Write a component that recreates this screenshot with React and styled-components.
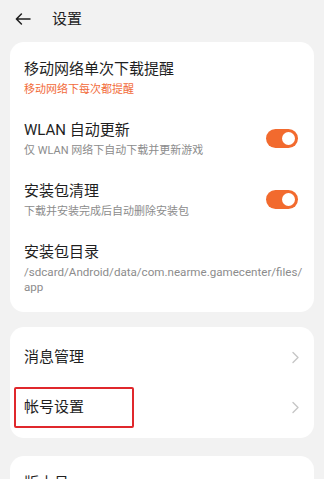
import React from 'react';
import styled, { createGlobalStyle } from 'styled-components';

const GlobalStyle = createGlobalStyle`
  html, body {
    margin: 0;
    padding: 0;
    background: #f2f2f2;
  }
  body {
    font-family: Roboto, "Noto Sans CJK SC", sans-serif;
    -webkit-font-smoothing: antialiased;
  }
`

const Page = styled.div`
  width: 324px;
  height: 479px;
  overflow: hidden;
  background: #f2f2f2;
`

const Header = styled.header`
  height: 37px;
  display: flex;
  align-items: center;
  padding: 0 0 0 15px;
  gap: 21px;
  color: #1f1f1f;
  h1 {
    margin: 0;
    font-size: 15px;
    font-weight: 400;
    line-height: 22px;
  }
`

const Card = styled.section`
  margin: ${p => p.top}px 10px 0;
  background: #fff;
  border-radius: 14px;
  padding: 5px 0 6px;
`

const Row = styled.div`
  position: relative;
  display: flex;
  align-items: center;
  justify-content: space-between;
  gap: 12px;
  padding: ${p => (p.compact ? '14px' : '11px')} 14px ${p => (p.compact ? '14px' : '11px')} 14px;
`

const Texts = styled.div`
  min-width: 0;
`

const Title = styled.div`
  font-size: 15px;
  line-height: 22px;
  color: #1f1f1f;
`

const Sub = styled.div`
  margin-top: 2px;
  font-size: 11px;
  line-height: 15px;
  color: ${p => (p.accent ? '#f26b3a' : '#8c8c8c')};
`

const Path = styled(Sub)`
  font-size: 11.6px;
  letter-spacing: 0;
`

const Toggle = styled.span`
  flex: none;
  width: 32px;
  height: 19px;
  margin-right: 2px;
  border-radius: 10px;
  background: #f26a2e;
  display: flex;
  align-items: center;
  justify-content: flex-end;
  padding-right: 3px;
  box-sizing: border-box;
  &::after {
    content: '';
    width: 13px;
    height: 13px;
    border-radius: 50%;
    background: #fff;
  }
`

const Mark = styled.div`
  position: absolute;
  left: 4px;
  top: 5px;
  width: 120px;
  height: 41px;
  box-sizing: border-box;
  border: 2px solid #e0282c;
  border-radius: 2px;
`

const Back = () => (
  <svg width="16" height="12" viewBox="0 0 16 12" fill="none">
    <path d="M15 6H1.6M6.4 1L1.4 6l5 5" stroke="#1f1f1f" strokeWidth="1.5" strokeLinecap="round" strokeLinejoin="round" />
  </svg>
)

const Chevron = () => (
  <svg width="9" height="13" viewBox="0 0 9 13" fill="none" style={{ flex: 'none' }}>
    <path d="M2 1.5l5 5-5 5" stroke="#c6c6c6" strokeWidth="1.4" strokeLinecap="round" strokeLinejoin="round" />
  </svg>
)

export default function App() {
  return (
    <Page>
      <GlobalStyle />
      <Header>
        <Back />
        <h1>设置</h1>
      </Header>
      <Card top={5}>
        <Row>
          <Texts>
            <Title>移动网络单次下载提醒</Title>
            <Sub accent>移动网络下每次都提醒</Sub>
          </Texts>
        </Row>
        <Row>
          <Texts>
            <Title>WLAN 自动更新</Title>
            <Sub>仅 WLAN 网络下自动下载并更新游戏</Sub>
          </Texts>
          <Toggle />
        </Row>
        <Row>
          <Texts>
            <Title>安装包清理</Title>
            <Sub>下载并安装完成后自动删除安装包</Sub>
          </Texts>
          <Toggle />
        </Row>
        <Row>
          <Texts>
            <Title>安装包目录</Title>
            <Path>
              /sdcard/Android/data/com.nearme.gamecenter/files/
              <br />
              app
            </Path>
          </Texts>
        </Row>
      </Card>
      <Card top={15}>
        <Row compact>
          <Title>消息管理</Title>
          <Chevron />
        </Row>
        <Row compact>
          <Title>帐号设置</Title>
          <Chevron />
          <Mark />
        </Row>
      </Card>
      <Card top={18}>
        <Row>
          <Texts>
            <Title>版本号</Title>
          </Texts>
        </Row>
      </Card>
    </Page>
  );
}
